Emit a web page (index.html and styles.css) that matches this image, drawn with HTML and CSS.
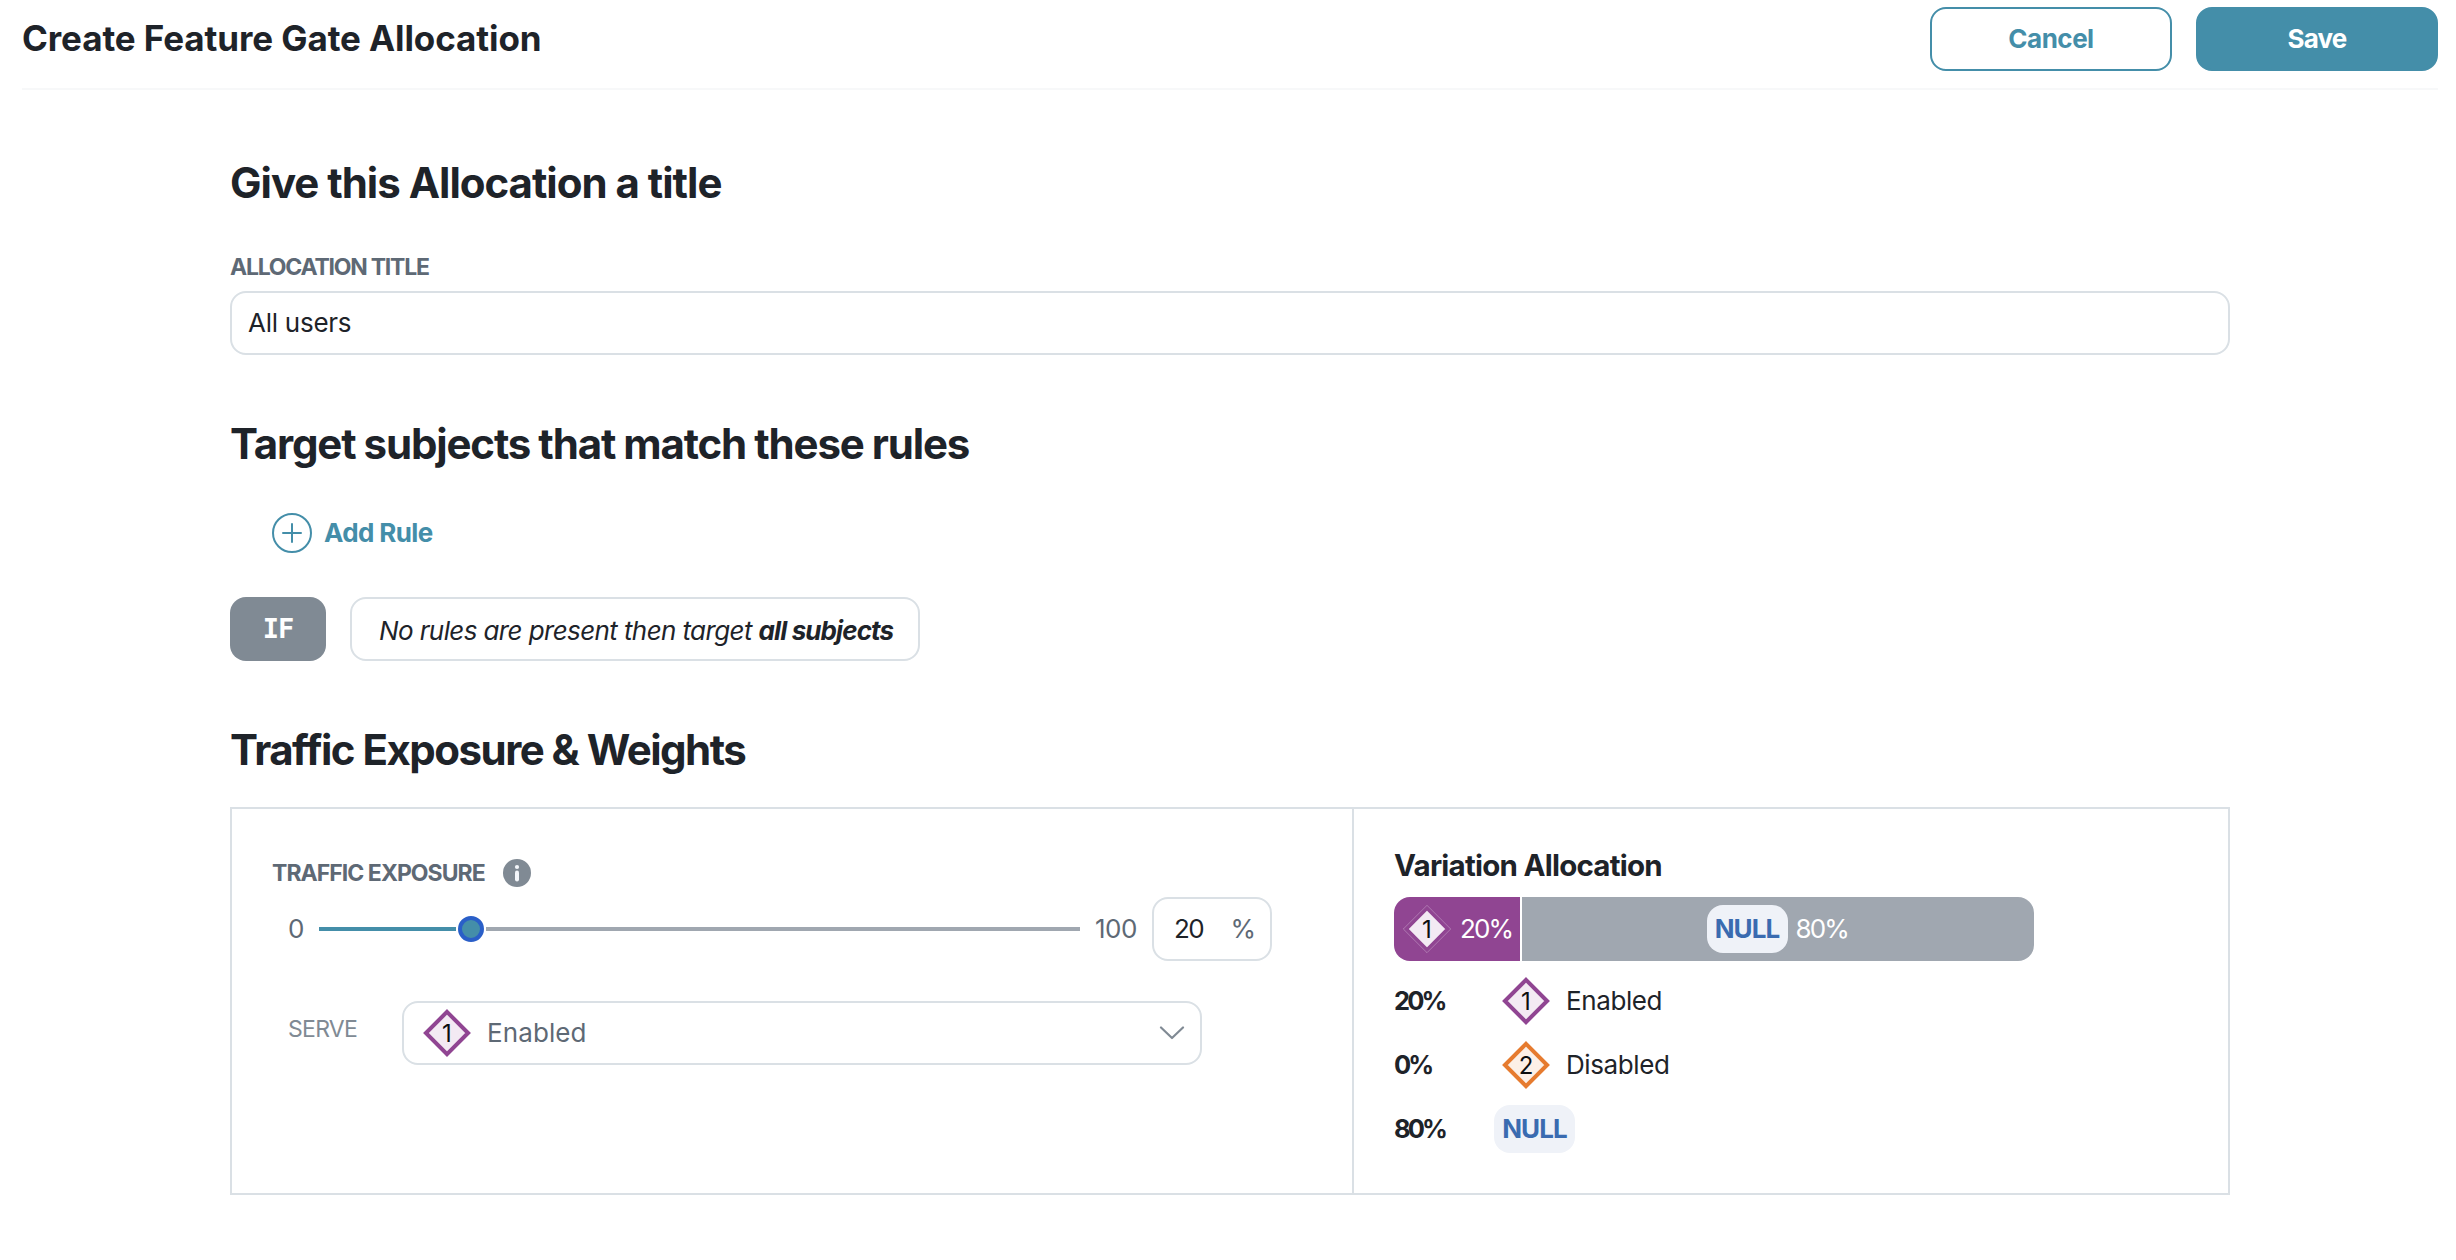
FILE: index.html
```html
<!DOCTYPE html>
<html lang="en">
<head>
<meta charset="utf-8">
<title>Create Feature Gate Allocation</title>
<link rel="stylesheet" href="styles.css">
</head>
<body>
<header class="topbar">
  <h1 class="page-title">Create Feature Gate Allocation</h1>
  <div class="actions">
    <button class="btn btn-outline">Cancel</button>
    <button class="btn btn-solid">Save</button>
  </div>
</header>
<main class="content">
  <section class="section-title">
    <h2 class="heading h-give">Give this Allocation a title</h2>
    <label class="label label-title">ALLOCATION TITLE</label>
    <div class="field title-field">All users</div>
  </section>
  <section class="section-rules">
    <h2 class="heading h-target">Target subjects that match these rules</h2>
    <a class="add-rule">
      <svg width="40" height="40" viewBox="0 0 40 40" fill="none" stroke="currentColor" stroke-width="2"><circle cx="20" cy="20" r="19"/><path d="M20 11v18M11 20h18" stroke-linecap="round"/></svg>
      <span>Add Rule</span>
    </a>
    <div class="rule-row">
      <div class="if-tag">IF</div>
      <div class="field rule-text"><span>No rules are present then target <b>all subjects</b></span></div>
    </div>
  </section>
  <section class="section-traffic">
    <h2 class="heading h-traffic">Traffic Exposure &amp; Weights</h2>
    <div class="panel">
      <div class="exposure">
        <div class="exposure-head">
          <span class="label label-exposure">TRAFFIC EXPOSURE</span>
          <svg class="info" width="28" height="28" viewBox="0 0 28 28"><circle cx="14" cy="14" r="14" fill="#808a94"/><circle cx="14" cy="8" r="2.100" fill="#f3f6fa"/><rect x="12" y="11.500" width="4" height="11" rx="2" fill="#f3f6fa"/></svg>
        </div>
        <div class="slider-row">
          <span class="bound">0</span>
          <div class="slider"><i class="fill"></i><i class="thumb"></i><i class="rest"></i></div>
          <span class="bound bound-max">100</span>
          <div class="field percent"><span class="value">20</span><span class="unit">%</span></div>
        </div>
        <div class="serve-row">
          <span class="serve-label">SERVE</span>
          <div class="field select">
            <svg class="diamond d1" viewBox="0 0 48 48"><path d="M24 2.900 45.100 24 24 45.100 2.900 24z"/><text x="24" y="32.500">1</text></svg>
            <span class="name select-name">Enabled</span>
            <svg class="chevron" width="26" height="14" viewBox="0 0 26 14"><path d="M2 1.500 13 12 24 1.500" fill="none" stroke="#808a94" stroke-width="2.200" stroke-linecap="round" stroke-linejoin="round"/></svg>
          </div>
        </div>
      </div>
      <div class="variation">
        <h3 class="sub-title">Variation Allocation</h3>
        <div class="bar">
          <div class="seg seg-one" style="width:126px">
            <svg class="diamond d1 on-fill" viewBox="0 0 48 48"><path d="M24 2.900 45.100 24 24 45.100 2.900 24z"/><path class="outline" d="M24 .3 47.700 24 24 47.700.3 24z"/><text x="24" y="32.500">1</text></svg>
            <span class="share">20%</span>
          </div>
          <div class="seg seg-null"><span class="null">NULL</span><span class="share">80%</span></div>
        </div>
        <div class="legend">
          <b class="pct">20%</b>
          <svg class="diamond d1" viewBox="0 0 48 48"><path d="M24 2.900 45.100 24 24 45.100 2.900 24z"/><text x="24" y="32.500">1</text></svg>
          <span class="name">Enabled</span>
        </div>
        <div class="legend">
          <b class="pct">0%</b>
          <svg class="diamond d2" viewBox="0 0 48 48"><path d="M24 2.900 45.100 24 24 45.100 2.900 24z"/><text x="24" y="32.500">2</text></svg>
          <span class="name">Disabled</span>
        </div>
        <div class="legend"><b class="pct">80%</b><span class="null">NULL</span></div>
      </div>
    </div>
  </section>
</main>
</body>
</html>
```

FILE: styles.css
```css
* { box-sizing: border-box; }
body {
  margin: 0;
  background: #fff;
  color: #1e2329;
  font: 400 26px/32px Inter, "Liberation Sans", sans-serif;
}
h1, h2, h3 { margin: 0; font-weight: 700; white-space: nowrap; }
b { font-weight: 700; }
.topbar {
  display: flex;
  justify-content: space-between;
  align-items: flex-start;
  height: 90px;
  margin: 0 18px 0 22px;
  padding-top: 7px;
  border-bottom: 2px solid #f7f8f9;
}
.page-title { font-size: 35px; line-height: 40px; margin-top: 11px; letter-spacing: -.09px; }
.actions { display: flex; gap: 24px; }
.btn {
  width: 242px;
  height: 64px;
  padding: 0;
  border: 2px solid #448ea9;
  border-radius: 16px;
  font: 700 26px/32px Inter, "Liberation Sans", sans-serif;
  letter-spacing: -.5px;
}
.btn-outline { background: #fff; color: #448ea9; }
.btn-solid { background: #448ea9; color: #fff; letter-spacing: -.8px; }
.content { width: 2000px; margin: 0 0 0 230px; }
.heading { font-size: 42px; line-height: 50px; }
.h-give { letter-spacing: -1.010px; }
.h-target { letter-spacing: -1.160px; word-spacing: -.6px; }
.h-traffic { letter-spacing: -1.520px; }
.field { border: 2px solid #dae0e5; border-radius: 16px; height: 64px; display: flex; align-items: center; white-space: nowrap; }
.label { display: block; font-size: 23px; line-height: 28px; font-weight: 700; color: #5e6975; white-space: nowrap; }
.section-title { padding-top: 68px; }
.label-title { margin-top: 45px; letter-spacing: -1.230px; }
.label-exposure { letter-spacing: -.96px; width: 213px; }
.title-field { margin-top: 10px; padding-left: 16px; letter-spacing: -.26px; }
.section-rules { padding-top: 64px; }
.add-rule { display: flex; align-items: center; gap: 12px; margin: 44px 0 0 42px; color: #448ea9; font-weight: 700; letter-spacing: -.62px; }
.rule-row { display: flex; gap: 24px; margin-top: 44px; }
.if-tag {
  width: 96px; height: 64px; border-radius: 16px;
  display: flex; align-items: center; justify-content: center;
  background: #808a94; color: #fff;
  font: 700 27px/32px "DejaVu Sans Mono", monospace;
  letter-spacing: -1px;
}
.rule-text { width: 570px; padding: 3px 0 0 27px; font-style: italic; letter-spacing: -.61px; }
.rule-text b { letter-spacing: -.89px; }
.section-traffic { padding-top: 64px; }
.panel { display: flex; height: 388px; margin-top: 32px; border: 2px solid #dae0e5; }
.exposure { width: 1122px; border-right: 2px solid #dae0e5; padding: 50px 0 0 40px; }
.exposure-head { display: flex; align-items: center; gap: 18px; }
.slider-row { display: flex; align-items: center; margin-top: 10px; padding-left: 16px; color: #5e6975; }
.bound { width: 16px; }
.bound-max { width: 42px; letter-spacing: -.49px; }
.slider { display: flex; align-items: center; width: 761px; margin: 0 15px; }
.fill { width: 137px; height: 4px; background: #448ea9; }
.thumb { width: 26px; height: 26px; margin: 0 2px; border: 4px solid #2a5fc8; border-radius: 50%; background: #448ea9; }
.rest { flex: 1; height: 4px; background: #a0a7b0; }
.percent { width: 120px; margin-left: 15px; padding: 0 14px 0 20px; justify-content: space-between; }
.value { color: #1e2329; letter-spacing: -1.500px; }
.serve-row { display: flex; margin-top: 40px; padding-left: 16px; }
.serve-label { width: 114px; margin-top: 12px; font-size: 23px; letter-spacing: -.72px; color: #808a94; }
.select { width: 800px; padding: 0 15px 0 19px; color: #5e6975; }
.diamond { width: 48px; height: 48px; flex: none; }
.diamond path { stroke-width: 4; }
.diamond text { font-size: 24px; text-anchor: middle; fill: #0c0e10; }
.d1 path { fill: #f3eaf3; stroke: #904592; }
.d2 path { fill: #fcf0e7; stroke: #e67b2f; }
.diamond .outline { fill: none; stroke: rgba(255, 255, 255, .4); stroke-width: .7; }
.select-name { flex: 1; margin-left: 16px; letter-spacing: .1px; }
.variation { padding: 38px 0 0 40px; }
.sub-title { font-size: 29.500px; line-height: 36px; letter-spacing: -.76px; }
.bar { display: flex; gap: 2px; width: 640px; height: 64px; margin: 14px 0 8px; border-radius: 16px; overflow: hidden; color: #fff; }
.seg { display: flex; align-items: center; }
.seg-one { background: #904592; padding-left: 9px; gap: 9px; }
.seg-null { flex: 1; background: #a0a7b0; justify-content: center; gap: 8px; }
.share { width: 54px; letter-spacing: -1.900px; }
.null { width: 81px; height: 48px; line-height: 48px; border-radius: 16px; background: #eff2f8; color: #3a6bb0; font-weight: 700; letter-spacing: -.92px; text-align: center; }
.legend { display: flex; align-items: center; height: 64px; }
.pct { width: 108px; font-size: 25.500px; letter-spacing: -2.900px; }
.legend .null { margin-left: -8px; }
.legend .name { margin-left: 16px; letter-spacing: -.4px; }
```
